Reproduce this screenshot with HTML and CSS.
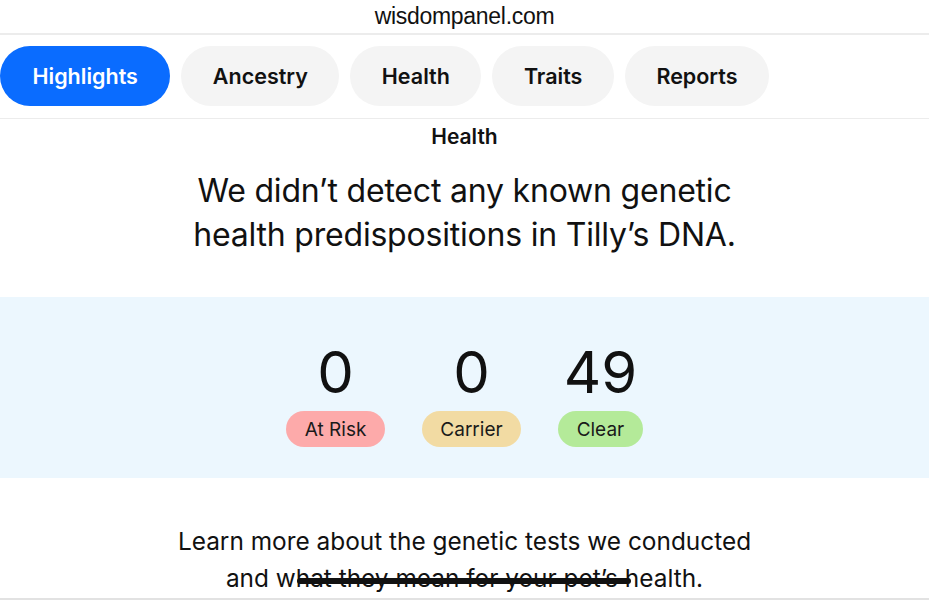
FILE: index.html
```html
<!DOCTYPE html>
<html>
<head>
<meta charset="utf-8">
<link rel="stylesheet" href="styles.css">
</head>
<body>
<div class="urlbar">wisdompanel.com</div>
<nav class="tabs">
  <div class="tab active">Highlights</div>
  <div class="tab">Ancestry</div>
  <div class="tab">Health</div>
  <div class="tab">Traits</div>
  <div class="tab">Reports</div>
</nav>
<main>
  <h2 class="section-title">Health</h2>
  <p class="headline">We didn’t detect any known genetic<br>health predispositions in Tilly’s DNA.</p>
  <section class="band">
    <div class="stat">
      <div class="num">0</div>
      <div class="pill risk">At Risk</div>
    </div>
    <div class="stat">
      <div class="num">0</div>
      <div class="pill carrier">Carrier</div>
    </div>
    <div class="stat">
      <div class="num">49</div>
      <div class="pill clear">Clear</div>
    </div>
  </section>
  <p class="learn">Learn more about the genetic tests we conducted<br>and what they mean for your pet’s health.</p>
</main>
<div class="home-indicator"></div>
</body>
</html>
```
FILE: styles.css
```css
html, body {
  margin: 0;
  padding: 0;
  background: #fff;
  color: #111;
  font-family: Inter, "Liberation Sans", sans-serif;
}
body {
  width: 929px;
  height: 600px;
  overflow: hidden;
  position: relative;
  border-bottom: 2px solid #e2e2e2;
  box-sizing: border-box;
}
.urlbar {
  height: 33px;
  border-bottom: 2px solid #ececec;
  display: flex;
  align-items: center;
  justify-content: center;
  font-family: "Liberation Sans", sans-serif;
  font-size: 23px;
  letter-spacing: -0.3px;
  color: #111;
}
.tabs {
  display: flex;
  gap: 11px;
  padding: 11px 0 12px 0;
  border-bottom: 1px solid #ececec;
}
.tab {
  flex-shrink: 0;
  height: 60px;
  border-radius: 30px;
  background: #f4f4f4;
  display: flex;
  align-items: center;
  justify-content: center;
  padding: 0 31.5px;
  font-size: 21.5px;
  font-weight: 600;
  color: #111;
}
.tab.active {
  background: #0a6cff;
  color: #fff;
  padding: 0 32.5px;
}
main {
  text-align: center;
}
.section-title {
  margin: 6px 0 0 0;
  font-size: 21px;
  font-weight: 600;
  line-height: 24px;
}
.headline {
  margin: 20px 0 0 0;
  font-size: 32px;
  font-weight: 400;
  line-height: 44px;
  letter-spacing: -0.2px;
}
.band {
  margin-top: 40px;
  height: 181px;
  background: #ecf7fe;
  display: flex;
  justify-content: center;
  gap: 37px;
  padding-top: 40px;
  box-sizing: border-box;
}
.stat {
  display: flex;
  flex-direction: column;
  align-items: center;
}
.num {
  font-size: 58px;
  line-height: 70px;
  font-weight: 400;
}
.pill {
  margin-top: 4px;
  height: 36px;
  border-radius: 18px;
  display: flex;
  align-items: center;
  justify-content: center;
  font-size: 19px;
  padding: 0 18.5px;
  color: #1a1a1a;
}
.risk { background: #fdaaaa; }
.carrier { background: #f2dba3; }
.clear { background: #b4ea99; }
.learn {
  margin: 45px 0 0 0;
  font-size: 24.4px;
  line-height: 37px;
  font-weight: 400;
}
.home-indicator {
  position: absolute;
  left: 297px;
  top: 578px;
  width: 334px;
  height: 6px;
  border-radius: 3px;
  background: #111;
}
```
